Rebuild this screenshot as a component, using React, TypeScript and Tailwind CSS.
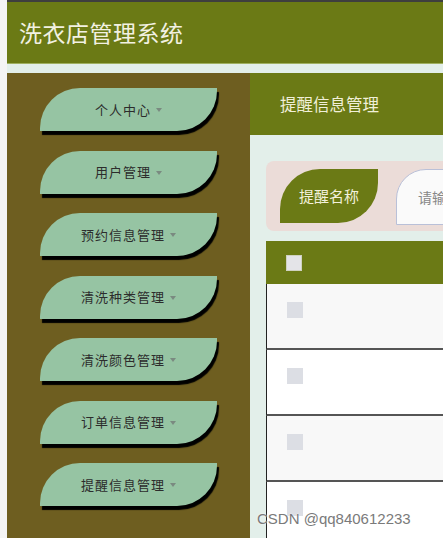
import React from 'react';

const menus = ['个人中心', '用户管理', '预约信息管理', '清洗种类管理', '清洗颜色管理', '订单信息管理', '提醒信息管理'];

const font = { fontFamily: '"Noto Sans CJK SC", "Noto Sans", sans-serif' };

const MenuButton = ({ label }: { label: string }) => (
  <div className="shrink-0 w-[177px] h-[43px] flex items-center justify-center gap-[5px] bg-[#96c4a3] rounded-tl-[40px] rounded-br-[40px] shadow-[2px_4px_1px_#000] text-[13px] text-[#2c2c2c]">
    <span className="tracking-[1px]">{label}</span>
    <span className="w-0 h-0 border-l-[3px] border-r-[3px] border-t-[4px] border-l-transparent border-r-transparent border-t-[#7a8a80] mt-[1px]"></span>
  </div>
);

const Row = ({ alt }: { alt: boolean }) => (
  <div className={`shrink-0 h-[66px] border-l border-[#222] border-b-2 border-b-[#555] pl-[20px] pt-[18px] ${alt ? 'bg-[#f8f8f8]' : 'bg-white'}`}>
    <div className="w-[16px] h-[16px] bg-[#dcdee4]"></div>
  </div>
);

const App = () => {
  return (
    <div className="relative w-[443px] h-[538px] overflow-hidden flex bg-white" style={font}>
      <div className="w-[7px] shrink-0 bg-[#f4f4f4]"></div>
      <div className="flex-1 min-w-0 flex flex-col">
        <div className="shrink-0 h-[2px] bg-[#3e3e3e]"></div>
        <div className="shrink-0 h-[62px] bg-[#6b7a15] border-b border-[#9fb060] flex items-center pl-[12px]">
          <h1 className="text-[23px] text-[#f2f1e2] tracking-[0.5px]">洗衣店管理系统</h1>
        </div>
        <div className="shrink-0 h-[9px] bg-[#e3efea]"></div>
        <div className="flex-1 min-h-0 flex">
          <aside className="shrink-0 w-[243px] bg-[#6e5e20] pt-[15px] pl-[33px] flex flex-col gap-[19.5px]">
            {menus.map((m) => (
              <MenuButton key={m} label={m} />
            ))}
          </aside>
          <main className="flex-1 min-w-0 overflow-hidden bg-[#e3efea] flex flex-col">
            <div className="shrink-0 h-[62px] bg-[#6b7a15] flex items-center pl-[30px]">
              <span className="text-[16.5px] text-[#f0efd8] whitespace-nowrap">提醒信息管理</span>
            </div>
            <div className="pl-[16px] pt-[26px]">
              <div className="bg-[#ebdcd8] rounded-l-[8px] h-[70px] pl-[14px] pt-[8px] flex gap-[18px]">
                <div className="shrink-0 w-[98px] h-[54px] bg-[#6b7a15] rounded-tl-[40px] rounded-br-[40px] flex items-center justify-center text-[15px] text-[#f3f1dc]">
                  提醒名称
                </div>
                <div className="w-[200px] shrink-0 h-[56px] bg-[#fafafa] border border-[#b9c0d8] rounded-tl-[30px] flex items-center pl-[21px] text-[14px] text-[#888] whitespace-nowrap">
                  请输入提醒名称
                </div>
              </div>
              <div className="mt-[10px]">
                <div className="h-[43px] bg-[#6b7a15] pl-[20px] flex items-center">
                  <div className="w-[16px] h-[16px] bg-[#e4e4e8] border border-[#cfd2c0]"></div>
                </div>
                <Row alt />
                <Row alt={false} />
                <Row alt />
                <Row alt={false} />
              </div>
            </div>
          </main>
        </div>
      </div>
      <div
        className="absolute left-[257px] top-[508px] text-[15px] text-[#7a7a7a] [text-shadow:0_0_2px_#fff]"
        style={{ fontFamily: '"Liberation Sans", Arial, sans-serif' }}
      >
        CSDN @qq840612233
      </div>
    </div>
  );
};

export default App;
